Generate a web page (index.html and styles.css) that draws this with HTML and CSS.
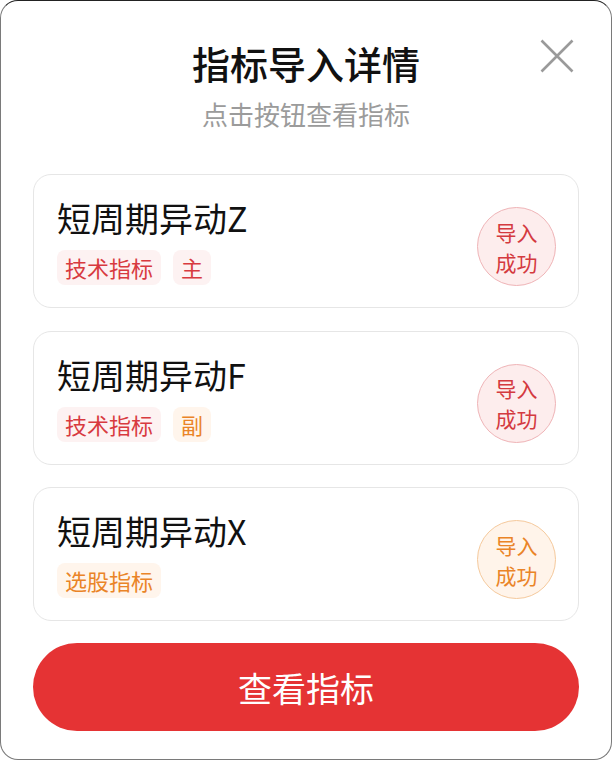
FILE: index.html
```html
<!DOCTYPE html>
<html lang="zh-CN">
<head>
    <meta charset="UTF-8">
    <meta name="viewport" content="width=device-width, initial-scale=1.0">
    <title>指标导入详情</title>
    <link rel="stylesheet" href="styles.css">
</head>
<body>
    <div class="modal">
        <button class="close" type="button" aria-label="关闭">
            <svg width="34" height="34" viewBox="0 0 34 34">
                <path d="M1.5 1.5 L32.5 32.5 M32.5 1.5 L1.5 32.5" stroke="#9a9a9a" stroke-width="2.6" fill="none"/>
            </svg>
        </button>
        <h1 class="title">指标导入详情</h1>
        <p class="subtitle">点击按钮查看指标</p>

        <div class="list">
            <div class="card">
                <div class="info">
                    <div class="name">短周期异动Z</div>
                    <div class="tags">
                        <span class="tag red">技术指标</span>
                        <span class="tag red">主</span>
                    </div>
                </div>
                <div class="status red">导入<br>成功</div>
            </div>
            <div class="card">
                <div class="info">
                    <div class="name">短周期异动F</div>
                    <div class="tags">
                        <span class="tag red">技术指标</span>
                        <span class="tag orange">副</span>
                    </div>
                </div>
                <div class="status red">导入<br>成功</div>
            </div>
            <div class="card">
                <div class="info">
                    <div class="name">短周期异动X</div>
                    <div class="tags">
                        <span class="tag orange">选股指标</span>
                    </div>
                </div>
                <div class="status orange">导入<br>成功</div>
            </div>
        </div>

        <button class="view-btn" type="button">查看指标</button>
    </div>
</body>
</html>
```

FILE: styles.css
```css
body {
    margin: 0;
    background-color: #fff;
    font-family: "Noto Sans CJK SC", "Noto Sans", sans-serif;
}
.modal {
    position: relative;
    box-sizing: border-box;
    width: 612px;
    height: 760px;
    padding: 37px 32px 0;
    background-color: #fff;
    border: 1px solid #7a7a7a;
    border-top-color: #222;
    border-radius: 18px;
}
.close {
    position: absolute;
    top: 38px;
    right: 37px;
    padding: 0;
    border: none;
    background: none;
    cursor: pointer;
}
.close svg {
    display: block;
}
.title {
    margin: 0;
    text-align: center;
    font-size: 38px;
    font-weight: 500;
    line-height: 49px;
    color: #111;
}
.subtitle {
    margin: 10px 0 0;
    text-align: center;
    font-size: 26px;
    line-height: 34px;
    color: #9b9b9b;
}
.list {
    display: flex;
    flex-direction: column;
    gap: 22.5px;
    margin-top: 43px;
}
.card {
    display: flex;
    align-items: center;
    justify-content: space-between;
    height: 134px;
    box-sizing: border-box;
    padding: 0 22px 0 23px;
    border: 1px solid #e6e6e6;
    border-radius: 18px;
}
.name {
    font-size: 34px;
    line-height: 41px;
    color: #111;
}
.tags {
    display: flex;
    gap: 12px;
    margin-top: 12px;
}
.tag {
    padding: 0 8px;
    font-size: 22px;
    line-height: 35px;
    border-radius: 8px;
}
.tag.red {
    color: #d83a3f;
    background-color: #fdf2f2;
}
.tag.orange {
    color: #ea8427;
    background-color: #fff5ec;
}
.status {
    display: flex;
    align-items: center;
    justify-content: center;
    width: 79px;
    height: 79px;
    margin-top: 11px;
    box-sizing: border-box;
    border-radius: 50%;
    text-align: center;
    font-size: 21px;
    line-height: 30px;
}
.status.red {
    color: #d43a3f;
    background-color: #fdeded;
    border: 1px solid #efb4b7;
}
.status.orange {
    color: #ea8427;
    background-color: #fff4ea;
    border: 1px solid #f5c99c;
}
.view-btn {
    display: block;
    width: 100%;
    height: 88px;
    margin-top: 22px;
    border: none;
    border-radius: 44px;
    background-color: #e53334;
    color: #fff;
    font-family: inherit;
    font-size: 34px;
    cursor: pointer;
}
```
